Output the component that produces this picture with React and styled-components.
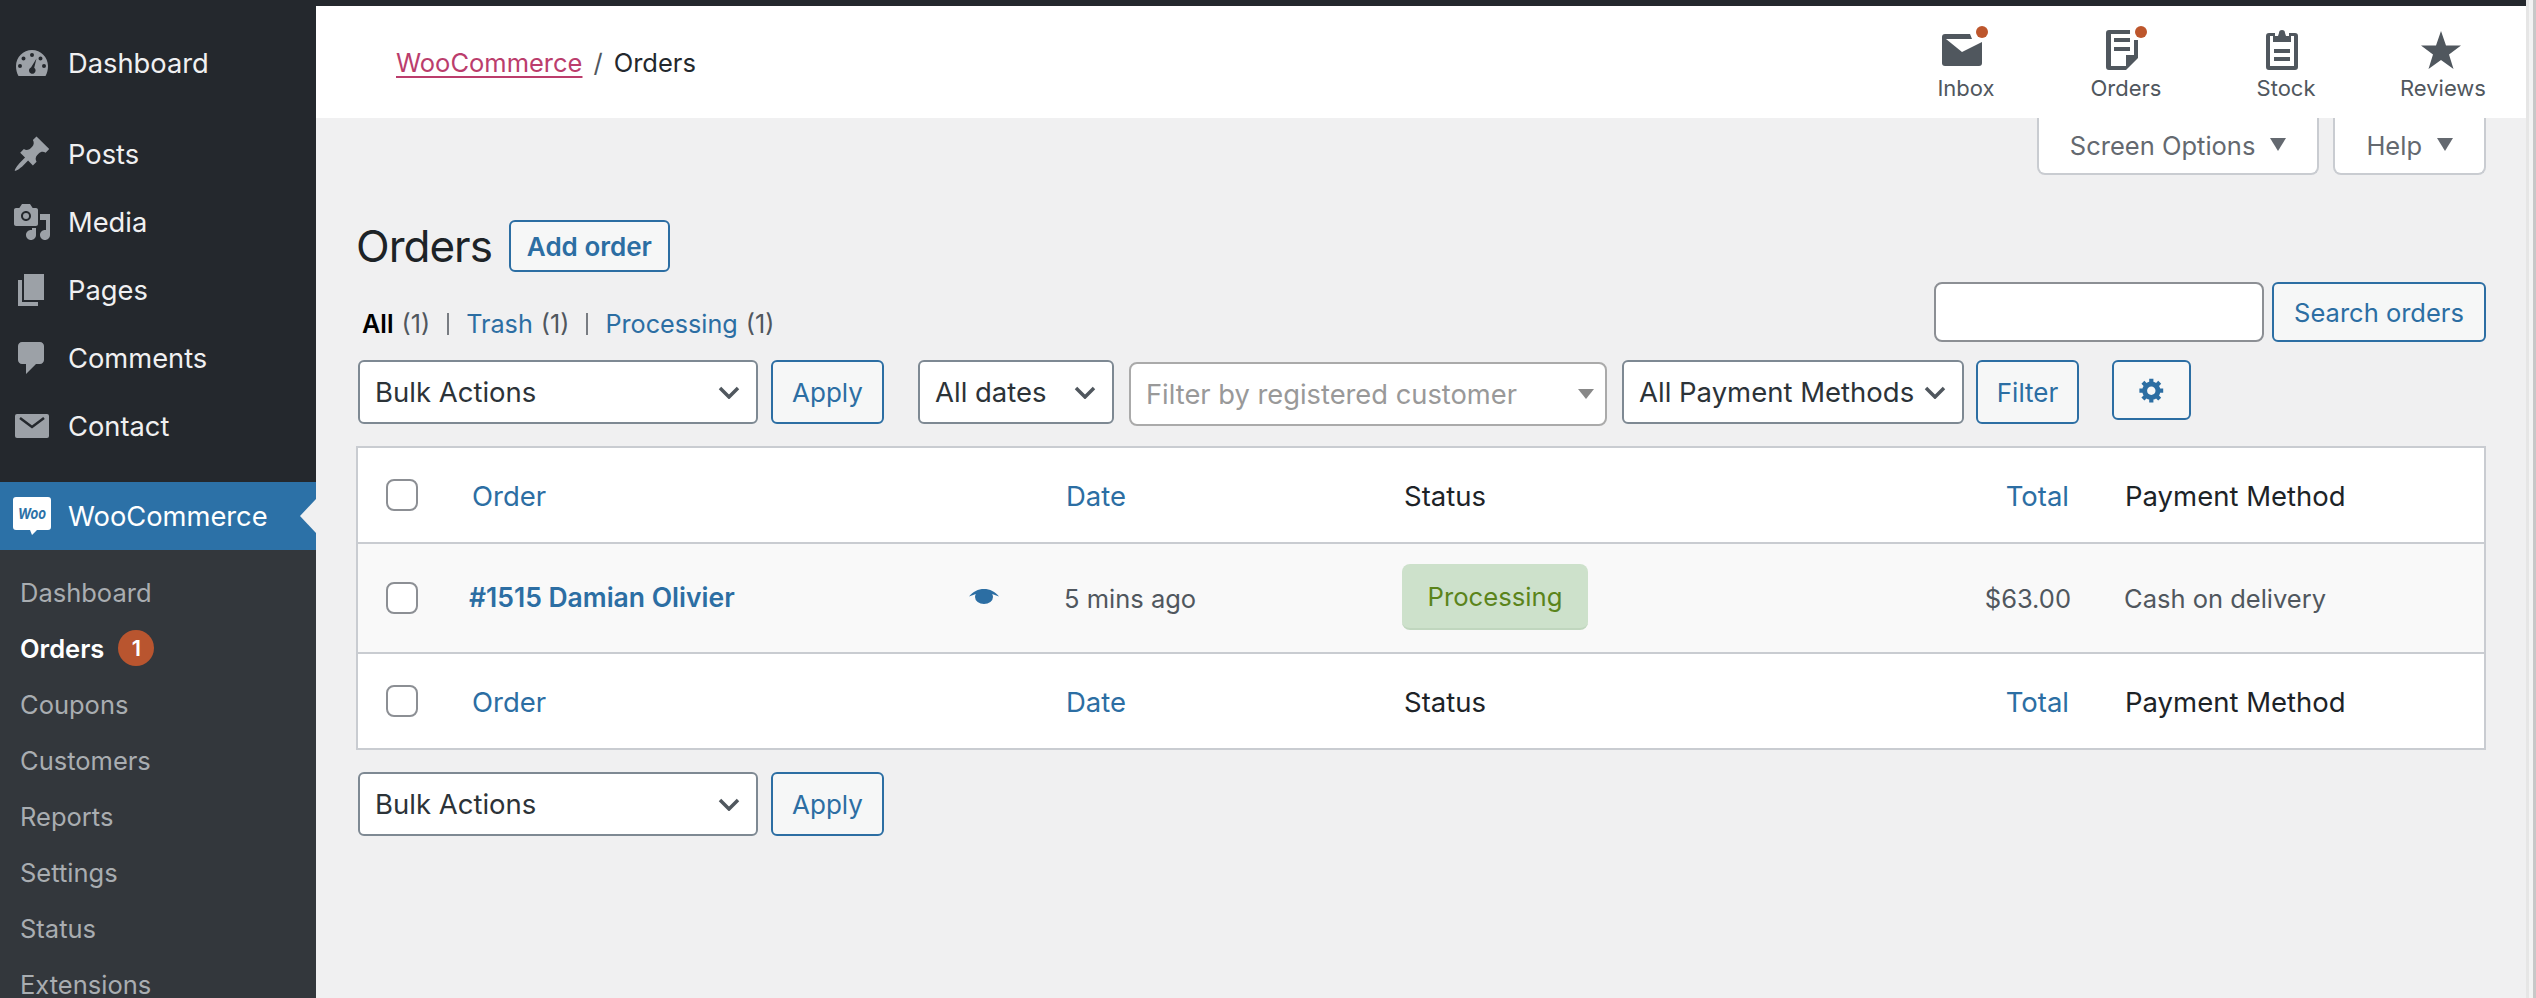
import React from 'react';
import styled, { createGlobalStyle } from 'styled-components';

const Global = createGlobalStyle`
  html, body {
    margin: 0;
    height: 998px;
    overflow: hidden;
    background: #f0f0f1;
    font-family: Inter, "Noto Sans", sans-serif;
  }
  * { box-sizing: border-box; }
`;

const Page = styled.div`
  height: 998px;
  display: flex;
  overflow: hidden;
`;

const Frame = styled.div`
  flex: 1;
  min-width: 0;
  display: flex;
  flex-direction: column;
`;

const TopStrip = styled.div`
  height: 6px;
  flex: none;
  background: #24282d;
`;

const Body = styled.div`
  flex: 1;
  min-height: 0;
  display: flex;
`;

const Sidebar = styled.nav`
  width: 316px;
  flex: none;
  background: #24282d;
  padding-top: 23px;
  display: flex;
  flex-direction: column;
`;

const MenuItem = styled.div`
  height: 68px;
  flex: none;
  display: flex;
  align-items: center;
  position: relative;
  margin-bottom: ${({ $sep }) => $sep || '0'};
  font-size: 27.3px;
  color: ${({ $active }) => ($active ? '#fff' : '#f0f0f1')};
  background: ${({ $active }) => ($active ? '#2c71a7' : 'transparent')};
`;

const MenuIcon = styled.span`
  width: 68px;
  flex: none;
  display: flex;
  justify-content: center;
  align-items: center;
  padding-right: 4px;
  svg { display: block; }
`;

const ActiveArrow = styled.span`
  position: absolute;
  right: 0;
  top: 17px;
  border-style: solid;
  border-width: 17px 16px 17px 0;
  border-color: transparent #f0f0f1 transparent transparent;
`;

const Submenu = styled.div`
  flex: 1;
  background: #33373c;
  padding: 14px 0 0 20px;
`;

const SubItem = styled.div`
  height: 56px;
  display: flex;
  align-items: center;
  gap: 14px;
  font-size: 25.5px;
  color: ${({ $current }) => ($current ? '#fff' : '#a9adb1')};
  font-weight: ${({ $current }) => ($current ? 600 : 400)};
`;

const Bubble = styled.span`
  width: 36px;
  height: 36px;
  border-radius: 50%;
  background: #b9552f;
  color: #fff;
  font-size: 22px;
  font-weight: 600;
  display: flex;
  align-items: center;
  justify-content: center;
`;

const Main = styled.div`
  flex: 1;
  min-width: 0;
  display: flex;
  flex-direction: column;
`;

const Scrollbar = styled.div`
  width: 10px;
  flex: none;
  background: #f3f3f3;
  border-left: 3px solid #e6e6e6;
  border-right: 3px solid #c8c8c8;
`;

const Header = styled.header`
  height: 112px;
  flex: none;
  background: #fff;
  display: flex;
  justify-content: space-between;
  padding-left: 80px;
`;

const Breadcrumb = styled.div`
  display: flex;
  gap: 11px;
  font-size: 25.5px;
  color: #23282d;
  padding-top: 40px;
  line-height: 34px;
`;

const CrumbLink = styled.a`
  color: #bb3d6c;
  text-decoration: underline;
  text-underline-offset: 4px;
`;

const CrumbSlash = styled.span`
  color: #50575e;
`;

const Activity = styled.div`
  display: flex;
  padding-right: 6px;
`;

const ActivityItem = styled.div`
  width: ${({ $w }) => $w || '160px'};
  position: relative;
  display: flex;
  flex-direction: column;
  align-items: center;
  padding-top: 24px;
  font-size: 22px;
  color: #50575e;
`;

const ActivityIcon = styled.span`
  height: 40px;
  display: flex;
  align-items: center;
  padding-right: ${({ $pr }) => $pr || '8px'};
  svg { display: block; }
`;

const ActivityLabel = styled.span`
  margin-top: 4px;
  line-height: 28px;
`;

const Dot = styled.span`
  position: absolute;
  top: 20px;
  left: ${({ $x }) => $x}px;
  width: 12px;
  height: 12px;
  border-radius: 50%;
  background: #bd562c;
`;

const Content = styled.div`
  padding: 0 40px;
  flex: 1;
`;

const ScreenMeta = styled.div`
  display: flex;
  justify-content: flex-end;
  gap: 14px;
`;

const MetaTab = styled.div`
  height: 57px;
  padding: 0 31px;
  background: #fff;
  border: 2px solid #c9ccd1;
  border-top: 0;
  border-radius: 0 0 8px 8px;
  display: flex;
  align-items: center;
  gap: 15px;
  font-size: 25.5px;
  color: #646970;
`;

const Caret = styled.span`
  border-style: solid;
  border-width: 13px 8px 0 8px;
  border-color: #646970 transparent transparent transparent;
  margin-top: -3px;
`;

const TitleRow = styled.div`
  display: flex;
  align-items: center;
  gap: 17px;
  margin-top: 45px;
`;

const Title = styled.h1`
  margin: 0;
  font-size: 44px;
  line-height: 52px;
  letter-spacing: -1px;
  font-weight: 400;
  color: #1d2327;
`;

const OutlineButton = styled.button`
  height: ${({ $h }) => $h || '64px'};
  width: ${({ $w }) => $w};
  margin-left: ${({ $ml }) => $ml || '0'};
  padding: 0;
  flex: none;
  border: 2px solid #2c6ea3;
  border-radius: 6px;
  background: #f6f7f7;
  color: #2c6ea3;
  font-family: inherit;
  font-size: ${({ $fs }) => $fs || '26px'};
  font-weight: ${({ $bold }) => ($bold ? 600 : 400)};
  display: flex;
  align-items: center;
  justify-content: center;
`;

const FilterRow = styled.div`
  display: flex;
  justify-content: space-between;
  align-items: flex-end;
  margin-top: 10px;
`;

const Subsub = styled.div`
  display: flex;
  align-items: center;
  padding-left: 6px;
  margin-bottom: 1px;
  font-size: 25.2px;
  line-height: 34px;
  color: #50575e;
`;

const SubLink = styled.a`
  color: ${({ $current }) => ($current ? '#000' : '#2c6ea3')};
  font-weight: ${({ $current }) => ($current ? 600 : 400)};
  margin-right: 8px;
`;

const SubSep = styled.span`
  width: 2px;
  height: 22px;
  background: #787c82;
  margin: 0 17px 0 17px;
`;

const SearchBox = styled.div`
  display: flex;
  gap: 8px;
`;

const SearchInput = styled.div`
  width: 330px;
  height: 60px;
  background: #fff;
  border: 2px solid #8c8f94;
  border-radius: 8px;
`;

const Toolbar = styled.div`
  display: flex;
  align-items: flex-start;
  margin-top: ${({ $mt }) => $mt};
  padding-left: 2px;
`;

const Group = styled.div`
  display: flex;
  gap: ${({ $gap }) => $gap || '13px'};
  margin-left: ${({ $ml }) => $ml || '0'};
`;

const Select = styled.div`
  width: ${({ $w }) => $w};
  height: 64px;
  background: #fff;
  border: 2px solid #7e8993;
  border-radius: 6px;
  display: flex;
  align-items: center;
  justify-content: space-between;
  padding: 0 16px 0 15px;
  font-size: 27.5px;
  color: #2c3338;
  white-space: nowrap;
  svg { display: block; flex: none; }
`;

const Combo = styled.div`
  width: 478px;
  height: 64px;
  margin-top: 2px;
  background: #fff;
  border: 2px solid #aaa;
  border-radius: 8px;
  display: flex;
  align-items: center;
  justify-content: space-between;
  padding: 0 11px 0 15px;
  font-size: 27.3px;
  color: #999;
`;

const ComboCaret = styled.span`
  border-style: solid;
  border-width: 10px 8px 0 8px;
  border-color: #888 transparent transparent transparent;
`;

const Table = styled.div`
  margin-top: 20px;
  background: #fff;
  border: 2px solid #c9ccd1;
`;

const Row = styled.div`
  height: ${({ $h }) => $h};
  padding-top: ${({ $head }) => ($head ? '2px' : '0')};
  display: grid;
  grid-template-columns: 114px 594px 338px 500px 167px 1fr;
  align-items: center;
  font-size: ${({ $head }) => ($head ? '27.5px' : '25.5px')};
  color: #1d2327;
  background: ${({ $odd }) => ($odd ? '#f9f9f9' : '#fff')};
  border-bottom: ${({ $line }) => ($line ? '2px solid #c9ccd1' : '0')};
`;

const CheckCell = styled.div`
  padding-left: 28px;
  margin-top: ${({ $head }) => ($head ? '-2px' : '0')};
`;

const Check = styled.span`
  display: block;
  width: 32px;
  height: 32px;
  background: #fff;
  border: 2px solid #8c8f94;
  border-radius: 8px;
`;

const HeadLink = styled.a`
  color: #2c6ea3;
`;

const OrderCell = styled.div`
  display: flex;
  align-items: center;
  justify-content: space-between;
  padding-right: 67px;
  margin: 0 0 3px -3px;
  svg { display: block; }
`;

const OrderLink = styled.a`
  color: #2c6ea3;
  font-size: 26.5px;
  font-weight: 600;
`;

const Cell = styled.div`
  color: ${({ $muted }) => ($muted ? '#50575e' : 'inherit')};
  margin-left: ${({ $muted }) => ($muted ? '-2px' : '0')};
  padding-left: ${({ $pl }) => $pl || '0'};
`;

const BadgeCell = styled.div`
  margin-bottom: 2px;
`;

const Badge = styled.span`
  display: inline-flex;
  align-items: center;
  height: 66px;
  padding: 0 25.5px;
  margin-left: -2px;
  border-radius: 8px;
  background: #cde1cb;
  border-bottom: 2px solid #c0d6be;
  color: #5b841b;
  font-size: 25.7px;
`;

const Total = styled.div`
  text-align: right;
  padding-right: ${({ $pr }) => $pr || '0'};
  color: #50575e;
`;

const ic = '#9ca1a7';

const PageIcons = {
  dashboard: (
    <svg width="32" height="26" viewBox="0 0 32 26" fill={ic}>
      <path fillRule="evenodd" d="M16 0C7.200 0 0 7.200 0 16c0 3.700.8 7 2.500 10h27c1.700-3 2.500-6.300 2.500-10C32 7.200 24.800 0 16 0zM16 3a2 2 0 1 1 0 4 2 2 0 0 1 0-4zM7.500 6.500a2 2 0 1 1 0 4 2 2 0 0 1 0-4zM24.500 6.500a2 2 0 1 1 0 4 2 2 0 0 1 0-4zM4 14a2 2 0 1 1 0 4 2 2 0 0 1 0-4zM28 14a2 2 0 1 1 0 4 2 2 0 0 1 0-4zM20.500 8.500 18.200 17.800a3.300 3.300 0 1 1-5.200 2.700c0-1.300.8-2.500 2-3z" />
    </svg>
  ),
  pin: (
    <svg width="40" height="40" viewBox="0 0 20 20" fill={ic}>
      <path d="M10.440 3.020l1.820-1.820 6.360 6.350-1.830 1.820c-1.050-.68-2.480-.57-3.410.36l-.75.75c-.92.93-1.040 2.350-.35 3.410l-1.830 1.820-2.410-2.410-2.800 2.790c-.42.42-3.380 2.710-3.800 2.290s1.860-3.390 2.280-3.810l2.790-2.790L4.100 9.360l1.830-1.820c1.050.69 2.480.57 3.400-.36l.75-.75c.93-.92 1.050-2.350.36-3.410z" />
    </svg>
  ),
  media: (
    <svg width="40" height="40" viewBox="0 0 20 20" fill={ic}>
      <path d="M13 11V4c0-.55-.45-1-1-1h-1.670L9 1H5L3.670 3H2c-.55 0-1 .45-1 1v7c0 .55.45 1 1 1h10c.55 0 1-.45 1-1zM7 4.500c1.380 0 2.500 1.120 2.500 2.500S8.380 9.500 7 9.500 4.500 8.380 4.500 7 5.620 4.500 7 4.500zM14 6h5v10.500c0 1.380-1.120 2.500-2.500 2.500S14 17.880 14 16.500s1.120-2.500 2.500-2.500c.17 0 .34.020.5.050V9h-3V6zm-4 8.050V13h2v3.500c0 1.380-1.120 2.500-2.500 2.500S7 17.880 7 16.500 8.120 14 9.500 14c.17 0 .34.020.5.050z" />
      <circle cx="7" cy="7" r="1.500" />
    </svg>
  ),
  pages: (
    <svg width="40" height="40" viewBox="0 0 20 20" fill={ic}>
      <path d="M6 15V2h10v13H6zm-1 1h8v2H3V5h2v11z" />
    </svg>
  ),
  comments: (
    <svg width="40" height="40" viewBox="0 0 20 20" fill={ic}>
      <path d="M5 2h9c1.100 0 2 .9 2 2v7c0 1.100-.9 2-2 2h-2l-5 5v-5H5c-1.100 0-2-.9-2-2V4c0-1.100.9-2 2-2z" />
    </svg>
  ),
  contact: (
    <svg width="34" height="24" viewBox="0 0 34 24">
      <rect width="34" height="24" rx="2" fill={ic} />
      <path d="M5 4l12 9 12-9" fill="none" stroke="#24282d" strokeWidth="2.500" />
    </svg>
  ),
};

const WooLogo = () => (
  <svg width="40" height="40" viewBox="0 0 40 40">
    <path fill="#fff" d="M4 1h32a3 3 0 0 1 3 3v27a3 3 0 0 1-3 3H25l-5 5-2-5H4a3 3 0 0 1-3-3V4a3 3 0 0 1 3-3z" />
    <text x="20" y="23" textAnchor="middle" fontFamily="Inter, sans-serif" fontSize="15" fontWeight="700" fontStyle="italic" fill="#2c71a7" textLength="28" lengthAdjust="spacingAndGlyphs">Woo</text>
  </svg>
);

const Chevron = () => (
  <svg width="22" height="13" viewBox="0 0 22 13" fill="none" stroke="#50575e" strokeWidth="3.500">
    <path d="M2 2l9 9 9-9" />
  </svg>
);

const Gear = () => (
  <svg width="28" height="28" viewBox="0 0 20 20" fill="#2c6ea3">
    <path d="M18 12h-2.180c-.17.7-.44 1.350-.81 1.930l1.540 1.540-2.100 2.100-1.540-1.540c-.58.360-1.230.640-1.910.810V19H8v-2.180c-.68-.170-1.330-.450-1.910-.810l-1.540 1.540-2.120-2.120 1.540-1.540c-.36-.58-.640-1.230-.810-1.890H1V9h2.180c.170-.7.450-1.350.810-1.930L2.450 5.530l2.100-2.100 1.540 1.540c.58-.360 1.230-.640 1.910-.810V2h3v2.180c.680.170 1.330.450 1.910.810l1.540-1.540 2.120 2.120-1.540 1.540c.360.580.640 1.230.810 1.890H18v3zm-8.500 1.500c1.660 0 3-1.340 3-3s-1.340-3-3-3-3 1.340-3 3 1.340 3 3 3z" />
  </svg>
);

const Eye = () => (
  <svg width="30" height="15" viewBox="0 0 30 15" fill="#2c6ea3">
    <path d="M0 7.500C4 2.500 9 0 15 0s11 2.500 15 7.500c-2.500-1-4.500-1.800-6.800-2.500.5 1 .8 2 .8 3a9 7 0 0 1-18 0c0-1 .3-2 .8-3C4.500 5.700 2.500 6.500 0 7.500z" />
  </svg>
);

const BulkActions = () => (
  <Group>
    <Select $w="400px">
      Bulk Actions
      <Chevron />
    </Select>
    <OutlineButton $w="113px">Apply</OutlineButton>
  </Group>
);

const HeadRow = ({ line, h }) => (
  <Row $h={h} $line={line} $head>
    <CheckCell $head><Check /></CheckCell>
    <HeadLink>Order</HeadLink>
    <HeadLink>Date</HeadLink>
    <Cell>Status</Cell>
    <Total $pr="2px"><HeadLink>Total</HeadLink></Total>
    <Cell $pl="54px">Payment Method</Cell>
  </Row>
);

export default function App() {
  return (
    <Page>
      <Global />
      <Frame>
        <TopStrip />
        <Body>
          <Sidebar>
            <MenuItem $sep="23px">
              <MenuIcon>{PageIcons.dashboard}</MenuIcon>Dashboard
            </MenuItem>
            <MenuItem><MenuIcon>{PageIcons.pin}</MenuIcon>Posts</MenuItem>
            <MenuItem><MenuIcon>{PageIcons.media}</MenuIcon>Media</MenuItem>
            <MenuItem><MenuIcon>{PageIcons.pages}</MenuIcon>Pages</MenuItem>
            <MenuItem><MenuIcon>{PageIcons.comments}</MenuIcon>Comments</MenuItem>
            <MenuItem $sep="22px"><MenuIcon>{PageIcons.contact}</MenuIcon>Contact</MenuItem>
            <MenuItem $active>
              <MenuIcon><WooLogo /></MenuIcon>WooCommerce
              <ActiveArrow />
            </MenuItem>
            <Submenu>
              <SubItem>Dashboard</SubItem>
              <SubItem $current>Orders <Bubble>1</Bubble></SubItem>
              <SubItem>Coupons</SubItem>
              <SubItem>Customers</SubItem>
              <SubItem>Reports</SubItem>
              <SubItem>Settings</SubItem>
              <SubItem>Status</SubItem>
              <SubItem>Extensions</SubItem>
            </Submenu>
          </Sidebar>
          <Main>
            <Header>
              <Breadcrumb>
                <CrumbLink>WooCommerce</CrumbLink>
                <CrumbSlash>/</CrumbSlash>
                <span>Orders</span>
              </Breadcrumb>
              <Activity>
                <ActivityItem>
                  <ActivityIcon>
                    <svg width="40" height="32" viewBox="0 0 40 32" fill="#50575e">
                      <rect width="40" height="32" rx="3" />
                      <path fill="#fff" d="M4 5h26l-2-5h12v8L20 18z" />
                    </svg>
                  </ActivityIcon>
                  <Dot $x={90} />
                  <ActivityLabel>Inbox</ActivityLabel>
                </ActivityItem>
                <ActivityItem>
                  <ActivityIcon>
                    <svg width="32" height="40" viewBox="0 0 32 40" fill="#50575e">
                      <path d="M3 0h21v4H5v32h15V25h8V10h4v18L20 40H3a3 3 0 0 1-3-3V3a3 3 0 0 1 3-3z" />
                      <path d="M8 8h16v4H8zM8 17h16v4H8z" />
                      <path d="M22 27h8L22 37z" />
                    </svg>
                  </ActivityIcon>
                  <Dot $x={89} />
                  <ActivityLabel>Orders</ActivityLabel>
                </ActivityItem>
                <ActivityItem>
                  <ActivityIcon>
                    <svg width="32" height="40" viewBox="0 0 32 40" fill="#50575e">
                      <path d="M3 3h6v3H4v30h24V6h-5V3h6a3 3 0 0 1 3 3v31a3 3 0 0 1-3 3H3a3 3 0 0 1-3-3V6a3 3 0 0 1 3-3z" />
                      <path d="M13 3a3 3 0 0 1 6 0l1 3h5v6H7V6h5z" />
                      <path d="M8 19h16v4H8zM8 27h16v4H8z" />
                    </svg>
                  </ActivityIcon>
                  <ActivityLabel>Stock</ActivityLabel>
                </ActivityItem>
                <ActivityItem $w="154px">
                  <ActivityIcon $pr="4px">
                    <svg width="40" height="38" viewBox="0 0 40 38" fill="#50575e">
                      <path d="M20 0l5 14.500h15L28 23.500 32.500 38 20 29 7.500 38 12 23.500 0 14.500h15z" />
                    </svg>
                  </ActivityIcon>
                  <ActivityLabel>Reviews</ActivityLabel>
                </ActivityItem>
              </Activity>
            </Header>
            <Content>
              <ScreenMeta>
                <MetaTab>Screen Options <Caret /></MetaTab>
                <MetaTab>Help <Caret /></MetaTab>
              </ScreenMeta>
              <TitleRow>
                <Title>Orders</Title>
                <OutlineButton $h="52px" $w="161px" $bold>Add order</OutlineButton>
              </TitleRow>
              <FilterRow>
                <Subsub>
                  <SubLink $current>All</SubLink>(1)
                  <SubSep />
                  <SubLink>Trash</SubLink>(1)
                  <SubSep />
                  <SubLink>Processing</SubLink>(1)
                </Subsub>
                <SearchBox>
                  <SearchInput />
                  <OutlineButton $h="60px" $w="214px" $fs="25.500px">Search orders</OutlineButton>
                </SearchBox>
              </FilterRow>
              <Toolbar $mt="18px">
                <BulkActions />
                <Group $ml="34px" $gap="15px">
                  <Select $w="196px">All dates <Chevron /></Select>
                  <Combo>Filter by registered customer <ComboCaret /></Combo>
                  <Select $w="342px">All Payment Methods <Chevron /></Select>
                </Group>
                <OutlineButton $w="103px" $ml="12px">Filter</OutlineButton>
                <OutlineButton $w="79px" $h="60px" $ml="33px"><Gear /></OutlineButton>
              </Toolbar>
              <Table>
                <HeadRow line h="96px" />
                <Row $h="110px" $odd $line>
                  <CheckCell><Check /></CheckCell>
                  <OrderCell>
                    <OrderLink>#1515 Damian Olivier</OrderLink>
                    <Eye />
                  </OrderCell>
                  <Cell $muted>5 mins ago</Cell>
                  <BadgeCell><Badge>Processing</Badge></BadgeCell>
                  <Total>$63.00</Total>
                  <Cell $muted $pl="55px">Cash on delivery</Cell>
                </Row>
                <HeadRow h="94px" />
              </Table>
              <Toolbar $mt="22px">
                <BulkActions />
              </Toolbar>
            </Content>
          </Main>
        </Body>
      </Frame>
      <Scrollbar />
    </Page>
  );
}
